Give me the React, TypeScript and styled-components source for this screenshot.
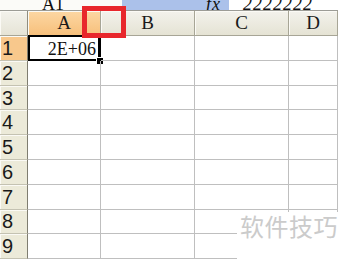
import styled, { createGlobalStyle } from 'styled-components';

const GlobalStyle = createGlobalStyle`
  html, body {
    margin: 0;
    padding: 0;
    background: #ffffff;
    overflow: hidden;
  }
`;

const columns = ['A', 'B', 'C', 'D'];
const rows = [1, 2, 3, 4, 5, 6, 7, 8, 9];

function App() {
  return (
    <>
      <GlobalStyle />
      <Sheet>
        <FormulaBar>
          <NameBox>
            <ClippedText>A1</ClippedText>
          </NameBox>
          <FxBox>
            <ClippedText italic>fx</ClippedText>
          </FxBox>
          <FormulaInput>
            <ClippedText italic>2222222</ClippedText>
          </FormulaInput>
        </FormulaBar>

        <Grid>
          <Corner />
          {columns.map((col) => (
            <ColumnHeader key={col} active={col === 'A'}>
              {col}
            </ColumnHeader>
          ))}

          {rows.map((row) => (
            <Row key={row}>
              <RowHeader active={row === 1}>{row}</RowHeader>
              {columns.map((col) => (
                <Cell key={col}>
                  {row === 1 && col === 'A' && (
                    <>
                      <CellValue>2E+06</CellValue>
                      <Selection>
                        <FillHandle />
                      </Selection>
                    </>
                  )}
                </Cell>
              ))}
            </Row>
          ))}
        </Grid>

        <Highlight />
        <Watermark>软件技巧</Watermark>
      </Sheet>
    </>
  );
}

export default App;

const Sheet = styled.div`
  position: relative;
  width: 338px;
  height: 261px;
  overflow: hidden;
  background: #ffffff;
`;

const FormulaBar = styled.div`
  display: flex;
  height: 10px;
  border-bottom: 1px solid #9c9c96;
  background: #ffffff;
`;

const BarBox = styled.div`
  display: flex;
  align-items: flex-end;
  overflow: hidden;
  height: 10px;
`;

const NameBox = styled(BarBox)`
  width: 122px;
  padding-left: 42px;
  box-sizing: border-box;
  background: #fbfbf8;
`;

const FxBox = styled(BarBox)`
  width: 107px;
  padding-left: 84px;
  box-sizing: border-box;
  background: #abc1ea;
`;

const FormulaInput = styled(BarBox)`
  flex: 1;
  padding-left: 14px;
  background: #ffffff;
`;

const ClippedText = styled.span<{ italic?: boolean }>`
  font-family: 'Liberation Serif', 'Times New Roman', serif;
  font-size: 18px;
  line-height: 18px;
  margin-bottom: -3px;
  color: #111111;
  font-style: ${({ italic }) => (italic ? 'italic' : 'normal')};
  letter-spacing: ${({ italic }) => (italic ? '1px' : '0')};
  white-space: nowrap;
`;

const Grid = styled.div`
  display: grid;
  grid-template-columns: 28px 73px 94px 94px 1fr;
  grid-template-rows: 25px repeat(9, 24.8px);
`;

const HeaderBase = styled.div`
  box-sizing: border-box;
  border-right: 1px solid #a7a596;
  border-bottom: 1px solid #a7a596;
  box-shadow: inset 1px 1px 0 #fbfaf5;
`;

const Corner = styled(HeaderBase)`
  background: linear-gradient(#f3f2ec, #e6e4d6);
  border-right-color: #8f8d7f;
`;

const ColumnHeader = styled(HeaderBase)<{ active?: boolean }>`
  display: flex;
  justify-content: center;
  align-items: flex-end;
  padding-bottom: 1px;
  font-family: 'Liberation Serif', 'Times New Roman', serif;
  font-size: 19px;
  line-height: 22px;
  color: #1a1a1a;
  background: ${({ active }) =>
    active
      ? 'linear-gradient(#fcd7a3, #f7c07c)'
      : 'linear-gradient(#f3f2ec, #e5e3d4)'};
`;

const Row = styled.div`
  display: contents;
`;

const RowHeader = styled(HeaderBase)<{ active?: boolean }>`
  display: flex;
  align-items: center;
  padding-left: 2px;
  padding-top: 1px;
  font-family: 'Liberation Sans', Arial, sans-serif;
  font-size: 20px;
  color: #1a1a1a;
  border-right-color: #7f7d70;
  border-bottom-color: #c4c2b2;
  background: ${({ active }) => (active ? '#f8c88c' : '#ecead9')};
`;

const Cell = styled.div`
  position: relative;
  box-sizing: border-box;
  display: flex;
  justify-content: flex-end;
  align-items: flex-end;
  border-right: 1px solid #bfbfbf;
  border-bottom: 1px solid #bfbfbf;
`;

const CellValue = styled.span`
  font-family: 'Liberation Serif', 'Times New Roman', serif;
  font-size: 18px;
  line-height: 20px;
  padding-right: 4px;
  padding-bottom: 1px;
  color: #111111;
`;

const Selection = styled.div`
  position: absolute;
  top: -1px;
  left: 0;
  right: -1px;
  bottom: -1px;
  border: 2px solid #000000;
  border-right-width: 3px;
`;

const FillHandle = styled.div`
  position: absolute;
  right: -5px;
  bottom: -5px;
  width: 6px;
  height: 6px;
  background: #000000;
  outline: 1px solid #ffffff;
`;

const Highlight = styled.div`
  position: absolute;
  left: 82px;
  top: 6px;
  width: 44px;
  height: 32px;
  box-sizing: border-box;
  border: 5px solid #e8272c;
`;

const Watermark = styled.div`
  position: absolute;
  left: 237px;
  top: 212px;
  right: 0;
  bottom: 0;
  padding-left: 3px;
  background: #ffffff;
  font-family: 'Noto Sans CJK SC', 'Noto Sans', sans-serif;
  font-size: 24px;
  line-height: 28px;
  letter-spacing: 0.5px;
  color: #cbcbcb;
  white-space: nowrap;
`;
